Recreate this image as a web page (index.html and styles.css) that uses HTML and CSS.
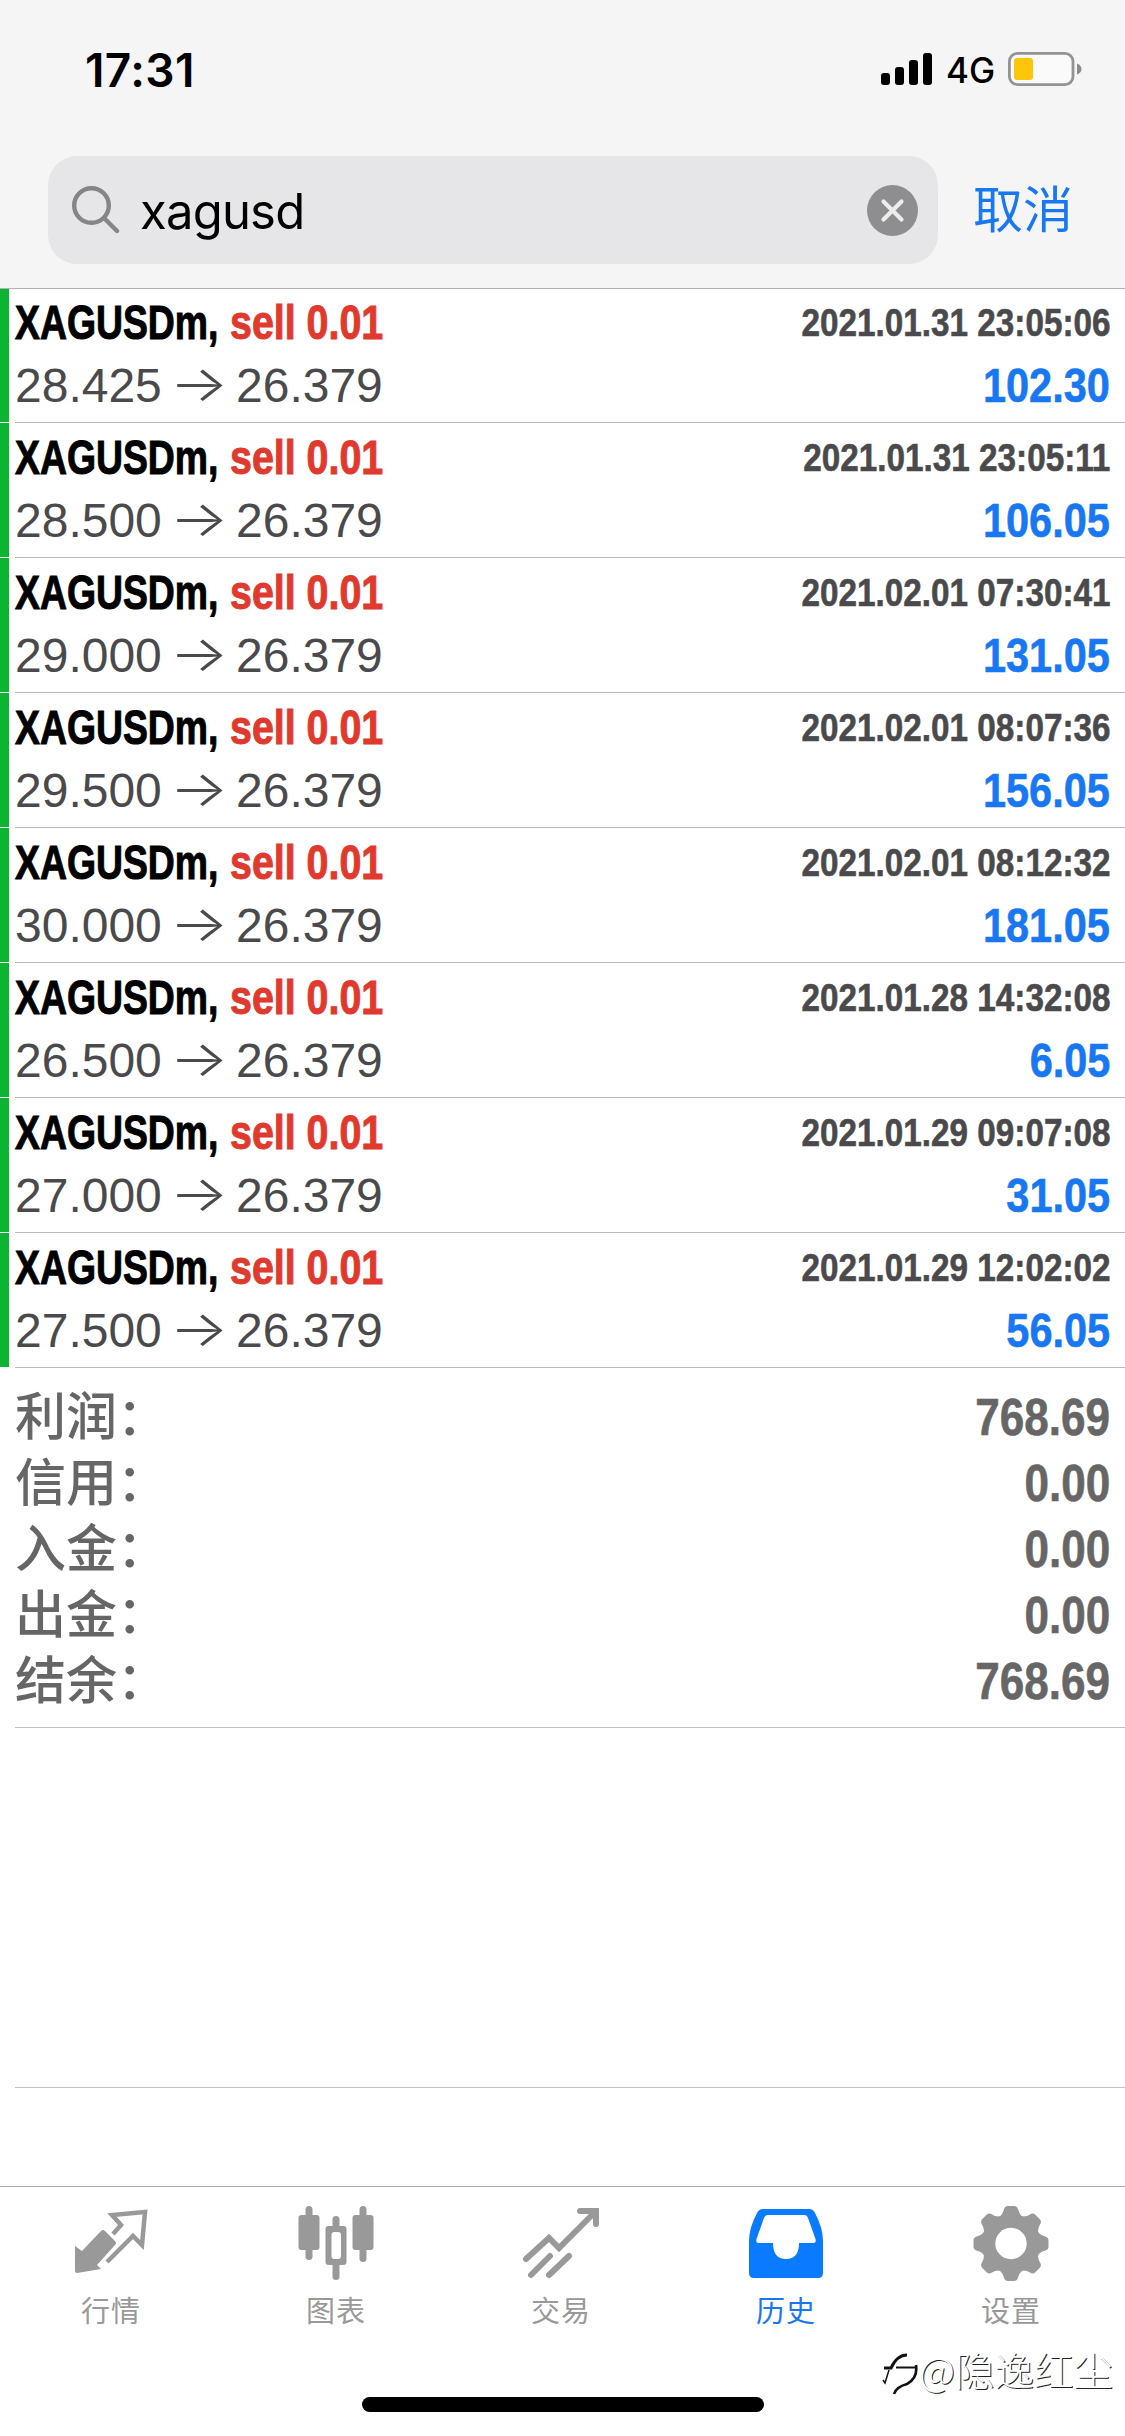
FILE: index.html
```html
<!DOCTYPE html>
<html lang="zh-CN">
<head>
<meta charset="utf-8">
<title>历史</title>
<link rel="stylesheet" href="styles.css">
</head>
<body>
<div class="screen">
  <header class="header">
    <div class="status">
      <span class="time">17:31</span>
      <div class="status-right">
        <svg class="signal" width="52" height="32" viewBox="0 0 52 32"><rect x="0" y="20" width="9" height="12" rx="3"/><rect x="14" y="14" width="9" height="18" rx="3"/><rect x="28" y="7" width="9" height="25" rx="3"/><rect x="42" y="0" width="9" height="32" rx="3"/></svg>
        <span class="network">4G</span>
        <svg class="battery" width="74" height="34" viewBox="0 0 74 34"><rect x="1.4" y="1.4" width="63.6" height="31.2" rx="8" fill="#fafafa" stroke="#939393" stroke-width="2.8"/><rect x="6" y="6" width="19" height="22" rx="3" fill="#fdc60b"/><path d="M69 11.5Q73.5 13.5 73.5 17T69 22.5Z" fill="#8a8a8a"/></svg>
      </div>
    </div>
    <div class="search">
      <div class="field">
        <svg class="magnifier" width="48" height="48" viewBox="0 0 48 48"><circle cx="19.5" cy="19.5" r="17.3"/><path d="M32 32L45 45"/></svg>
        <span class="query">xagusd</span>
        <svg class="clear" width="51" height="51" viewBox="0 0 51 51"><circle cx="25.5" cy="25.5" r="25.5" fill="#8e8e90"/><path d="M16.500 16.500l18 18M34.500 16.500l-18 18" stroke="#ededee" stroke-width="4.200" stroke-linecap="round"/></svg>
      </div>
      <span class="cancel">取消</span>
    </div>
  </header>
  <main class="deals" id="deals"></main>
  <section class="summary">
    <div class="total"><span>利润：</span><b>768.69</b></div>
    <div class="total"><span>信用：</span><b>0.00</b></div>
    <div class="total"><span>入金：</span><b>0.00</b></div>
    <div class="total"><span>出金：</span><b>0.00</b></div>
    <div class="total"><span>结余：</span><b>768.69</b></div>
  </section>
  <div class="blank"></div>
  <nav class="tabs">
    <div class="tab"><svg width="78" height="78" viewBox="0 0 78 78"><path d="M3 40l7 5 19-20q2-2 4 0l10 10q2 2 0 4L25 59l4 4L5 67q-2 0-2-2z" fill="#999"/><path d="M41 28l8-9-9-10 33-3-3 33-9-9-26 26" fill="none" stroke="#999" stroke-width="4.500"/></svg><span>行情</span></div>
    <div class="tab"><svg width="78" height="78" viewBox="0 0 78 78"><g fill="#999"><rect x="8.500" y="0" width="7" height="54" rx="3.500"/><rect x="1.500" y="9" width="21" height="35" rx="3"/><rect x="62.500" y="0" width="7" height="56" rx="3.500"/><rect x="55.500" y="9" width="21" height="35" rx="3"/><rect x="35.500" y="10" width="7" height="64" rx="3.500"/><rect x="28.500" y="20" width="21" height="39" rx="3"/></g><rect x="34.500" y="26" width="9.500" height="27" rx="3" fill="#fff"/></svg><span>图表</span></div>
    <div class="tab"><svg width="78" height="78" viewBox="0 0 78 78"><g fill="none" stroke="#999" stroke-width="6" stroke-linecap="round"><path d="M4 53L27 32l10 10L73 6M58 5h16v13M9 69l19-19M27 69l20-19"/></g></svg><span>交易</span></div>
    <div class="tab active"><svg width="78" height="78" viewBox="0 0 78 78"><path fill-rule="evenodd" fill="#0a7aff" d="M16 3h46q4 0 6 4 8 15 8 28v32q0 5-5 5H7q-5 0-5-5V35Q2 22 10 7q2-4 6-4zM21 9q-3 0-4 3L9.500 33q-1 4 2 4H26q0 16 13 16t13-16h14.500q3 0 2-4L61 12q-1-3-4-3z"/></svg><span>历史</span></div>
    <div class="tab"><svg width="78" height="78" viewBox="0 0 78 78"><g fill="#999"><circle cx="39" cy="37.500" r="29.500"/><g id="teeth"><path id="tooth" d="M27 11Q31 8 32 3q1-3 4-3h6q3 0 4 3 1 5 5 8z"/><use href="#tooth" transform="rotate(45 39 37.500)"/><use href="#tooth" transform="rotate(90 39 37.500)"/><use href="#tooth" transform="rotate(135 39 37.500)"/></g><use href="#teeth" transform="rotate(180 39 37.500)"/></g><circle cx="39" cy="37.500" r="15.700" fill="#fff"/></svg><span>设置</span></div>
  </nav>
  <div class="home"></div>
  <div class="watermark"><svg width="38" height="50" viewBox="0 0 38 50" fill="none" stroke="#111"><path d="M3 21h7Q16 8 26 8" stroke-width="3"/><path d="M15 20.500h20" stroke-width="2"/><path d="M35 18q2 13-9 19-11 3-13 10" stroke-width="2.600"/><path d="M8 23L4 36l-2-3" stroke-width="1.500"/></svg><span>@隐逸红尘</span></div>
</div>
<script src="deals.js"></script>
</body>
</html>
```
FILE: deals.js
```js
const deals = [
  ["28.425", "2021.01.31 23:05:06", "102.30"],
  ["28.500", "2021.01.31 23:05:11", "106.05"],
  ["29.000", "2021.02.01 07:30:41", "131.05"],
  ["29.500", "2021.02.01 08:07:36", "156.05"],
  ["30.000", "2021.02.01 08:12:32", "181.05"],
  ["26.500", "2021.01.28 14:32:08", "6.05"],
  ["27.000", "2021.01.29 09:07:08", "31.05"],
  ["27.500", "2021.01.29 12:02:02", "56.05"]
];
document.getElementById("deals").innerHTML = deals.map(([open, date, profit]) => `
  <article class="deal">
    <div class="line top"><span class="symbol">XAGUSDm,</span><span class="side">sell 0.01</span><span class="date">${date}</span></div>
    <div class="line"><span class="price">${open}</span><span class="arrow">→</span><span class="price">26.379</span><span class="profit">${profit}</span></div>
  </article>`).join("");
```
FILE: styles.css
```css
* { box-sizing: border-box; }
body { margin: 0; background: #fff; font-family: "Liberation Sans", "Noto Sans CJK SC", sans-serif; }
.screen { position: relative; width: 1125px; height: 2436px; overflow: hidden; display: flex; flex-direction: column; background: #fff; }
.header { flex: none; height: 289px; background: #f5f5f6; border-bottom: 1px solid #b2b2b4; }
.status { height: 156px; padding: 53px 43px 0 85px; display: flex; justify-content: space-between; align-items: flex-start; }
.time { font: 600 46px/34px Inter, sans-serif; letter-spacing: .4px; }
.status-right { display: flex; align-items: center; height: 32px; }
.network { width: 61px; margin-left: 13px; padding-top: 2px; font: 500 35px/34px Inter, sans-serif; }
.signal { display: block; }
.battery { margin-left: 1px; }
.search { display: flex; align-items: center; height: 108px; padding-left: 48px; }
.field { display: flex; align-items: center; width: 890px; height: 108px; padding: 0 20px 0 24px; border-radius: 29px; background: #e6e6e8; }
.magnifier { fill: none; stroke: #858588; stroke-width: 4.4; stroke-linecap: round; }
.query { flex: 1; margin-left: 20px; padding-top: 3px; font: 400 49px/60px Inter, sans-serif; letter-spacing: -0.800px; }
.cancel { margin-left: 35px; padding-bottom: 8px; font: 400 50px/60px "Noto Sans CJK SC", sans-serif; color: #1877f2; }
.deals { margin-top: -1px; position: relative; }
.deal { height: 135px; padding: 12px 15px 0 15px; background: linear-gradient(#bbbbbd, #bbbbbd) 15px 134px / 1110px 1px no-repeat, linear-gradient(#0cb531, #0cb531) 0 0 / 9px 134px no-repeat; }
.deal:first-child { box-shadow: inset 0 1px #b2b2b4; }
.line { display: flex; align-items: center; height: 63px; white-space: nowrap; font-size: 48px; line-height: 63px; color: #4a4a4d; }
.line.top { height: 54px; line-height: 46px; align-items: flex-start; }
.symbol, .side { flex: none; font-weight: 700; transform-origin: left; -webkit-text-stroke: 1px currentColor; }
.symbol { width: 215px; color: #000; transform: scaleX(.778); }
.side { width: 155px; color: #e03a2f; transform: scaleX(.82); }
.date, .profit, .total b { margin-left: auto; font-weight: 700; transform-origin: right; transform: scaleX(.864); -webkit-text-stroke: .6px currentColor; }
.date { font-size: 38.500px; }
.profit { color: #1877f2; }
.price { width: 147px; }
.arrow { width: 74px; text-align: center; font: 300 50px/56px Inter, sans-serif; transform: scaleX(1.240); padding-bottom: 6px; }
.summary { height: 360px; padding: 14px 15px; position: relative; background: linear-gradient(#c0c0c2, #c0c0c2) 15px 359px / 1110px 1px no-repeat; }
.total { height: 66px; display: flex; align-items: center; font: 500 51px/66px "Noto Sans CJK SC", sans-serif; color: #666; }
.total span { padding-bottom: 5px; }
.total b { padding-top: 5px; font-family: "Liberation Sans", sans-serif; font-size: 51px; }
.blank { height: 458px; background: linear-gradient(#c4c4c6, #c4c4c6) 15px 359px / 1110px 1px no-repeat; }
.tabs { height: 250px; padding-top: 19px; display: grid; grid-template-columns: repeat(5, 225px); border-top: 1px solid #acacae; color: #999; }
.tab { display: flex; flex-direction: column; align-items: center; padding-right: 3px; font: 400 29px/40px "Noto Sans CJK SC", sans-serif; letter-spacing: 1px; }
.tab span { margin-top: 5px; }
.active { color: #1877f2; }
.home { position: absolute; left: 362px; top: 2397px; width: 402px; height: 15px; border-radius: 8px; background: #000; }
.watermark { position: absolute; left: 881px; top: 2349px; display: flex; align-items: center; height: 46px; white-space: nowrap; font: 300 39.500px/46px "Noto Sans CJK SC", sans-serif; color: #fff; text-shadow: 1px 1px 0 #222; }
.watermark svg { flex: none; }
.watermark span { padding-bottom: 6px; }
```
